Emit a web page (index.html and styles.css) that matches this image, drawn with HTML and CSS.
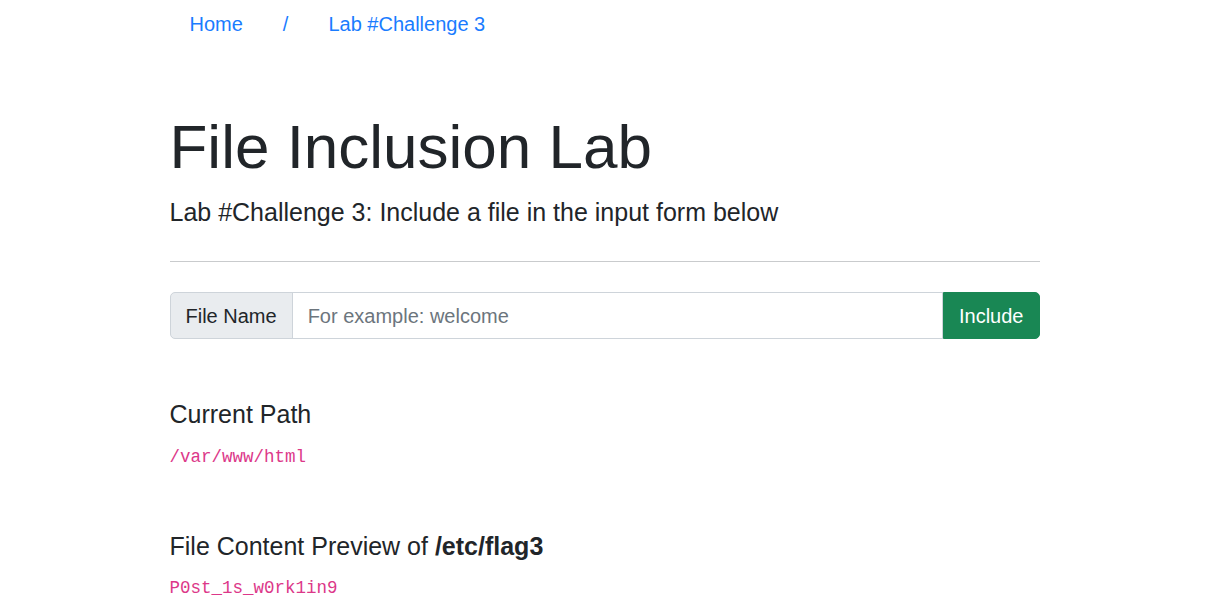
FILE: index.html
```html
<!DOCTYPE html>
<html lang="en">
<head>
<meta charset="utf-8">
<title>File Inclusion Lab</title>
<link rel="stylesheet" href="styles.css">
</head>
<body>
<div class="container">
  <nav class="crumbs">
    <a class="crumb" href="#">Home</a>
    <a class="crumb" href="#">/</a>
    <a class="crumb" href="#">Lab #Challenge 3</a>
  </nav>
  <h1 class="title">File Inclusion Lab</h1>
  <p class="lead">Lab #Challenge 3: Include a file in the input form below</p>
  <hr class="rule">
  <form class="input-group">
    <span class="addon">File Name</span>
    <input class="field" type="text" placeholder="For example: welcome">
    <button class="btn" type="button">Include</button>
  </form>
  <section class="block">
    <h5 class="block-title">Current Path</h5>
    <p class="block-text"><code class="code">/var/www/html</code></p>
  </section>
  <section class="block block-next">
    <h5 class="block-title">File Content Preview of <b>/etc/flag3</b></h5>
    <p class="block-text"><code class="code">P0st_1s_w0rk1in9</code></p>
  </section>
</div>
</body>
</html>
```
FILE: styles.css
```css
html, body {
  margin: 0;
  padding: 0;
  background: #fff;
}
body {
  font-family: "Liberation Sans", Arial, sans-serif;
  font-size: 20px;
  line-height: 1.5;
  color: #212529;
}
.container {
  width: 870px;
  margin: 0 auto;
}
.crumbs {
  display: flex;
  height: 50px;
}
.crumb {
  display: block;
  padding: 9px 20px 11px;
  color: #1a7cff;
  text-decoration: none;
  line-height: 30px;
}
.title {
  margin: 60px 0 0;
  font-size: 62px;
  font-weight: 400;
  line-height: 1.2;
}
.lead {
  margin: 10px 0 0;
  font-size: 25px;
  line-height: 1.5;
}
.rule {
  margin: 29px 0 30px;
  border: 0;
  border-top: 1px solid #c9cbcd;
  height: 0;
}
.input-group {
  display: flex;
  height: 47px;
  margin: 0;
}
.addon {
  display: flex;
  align-items: center;
  padding: 2px 15px 0;
  background: #e9ecef;
  border: 1px solid #ced4da;
  border-radius: 5px 0 0 5px;
  font-size: 20px;
  color: #212529;
  white-space: nowrap;
}
.field {
  flex: 1;
  min-width: 0;
  margin: 0 0 0 -1px;
  padding: 2px 15px 0;
  border: 1px solid #ced4da;
  border-radius: 0;
  font-family: inherit;
  font-size: 20px;
  color: #212529;
  outline: none;
}
.field::placeholder {
  color: #6c757d;
  opacity: 1;
}
.btn {
  margin: 0;
  padding: 2px 15px 0;
  background: #198754;
  border: 1px solid #198754;
  border-radius: 0 5px 5px 0;
  color: #fff;
  font-family: inherit;
  font-size: 20px;
  cursor: pointer;
}
.block {
  margin-top: 60px;
}
.block-next {
  margin-top: 61px;
}
.block-title {
  margin: 0 0 11px;
  font-size: 25px;
  font-weight: 400;
  line-height: 1.2;
}
.block-next .block-title {
  margin-bottom: 10px;
}
.block-title b {
  font-weight: 700;
}
.block-text {
  margin: 0;
}
.code {
  font-family: "Liberation Mono", "Courier New", monospace;
  font-size: 17.5px;
  color: #dc3889;
}
```
